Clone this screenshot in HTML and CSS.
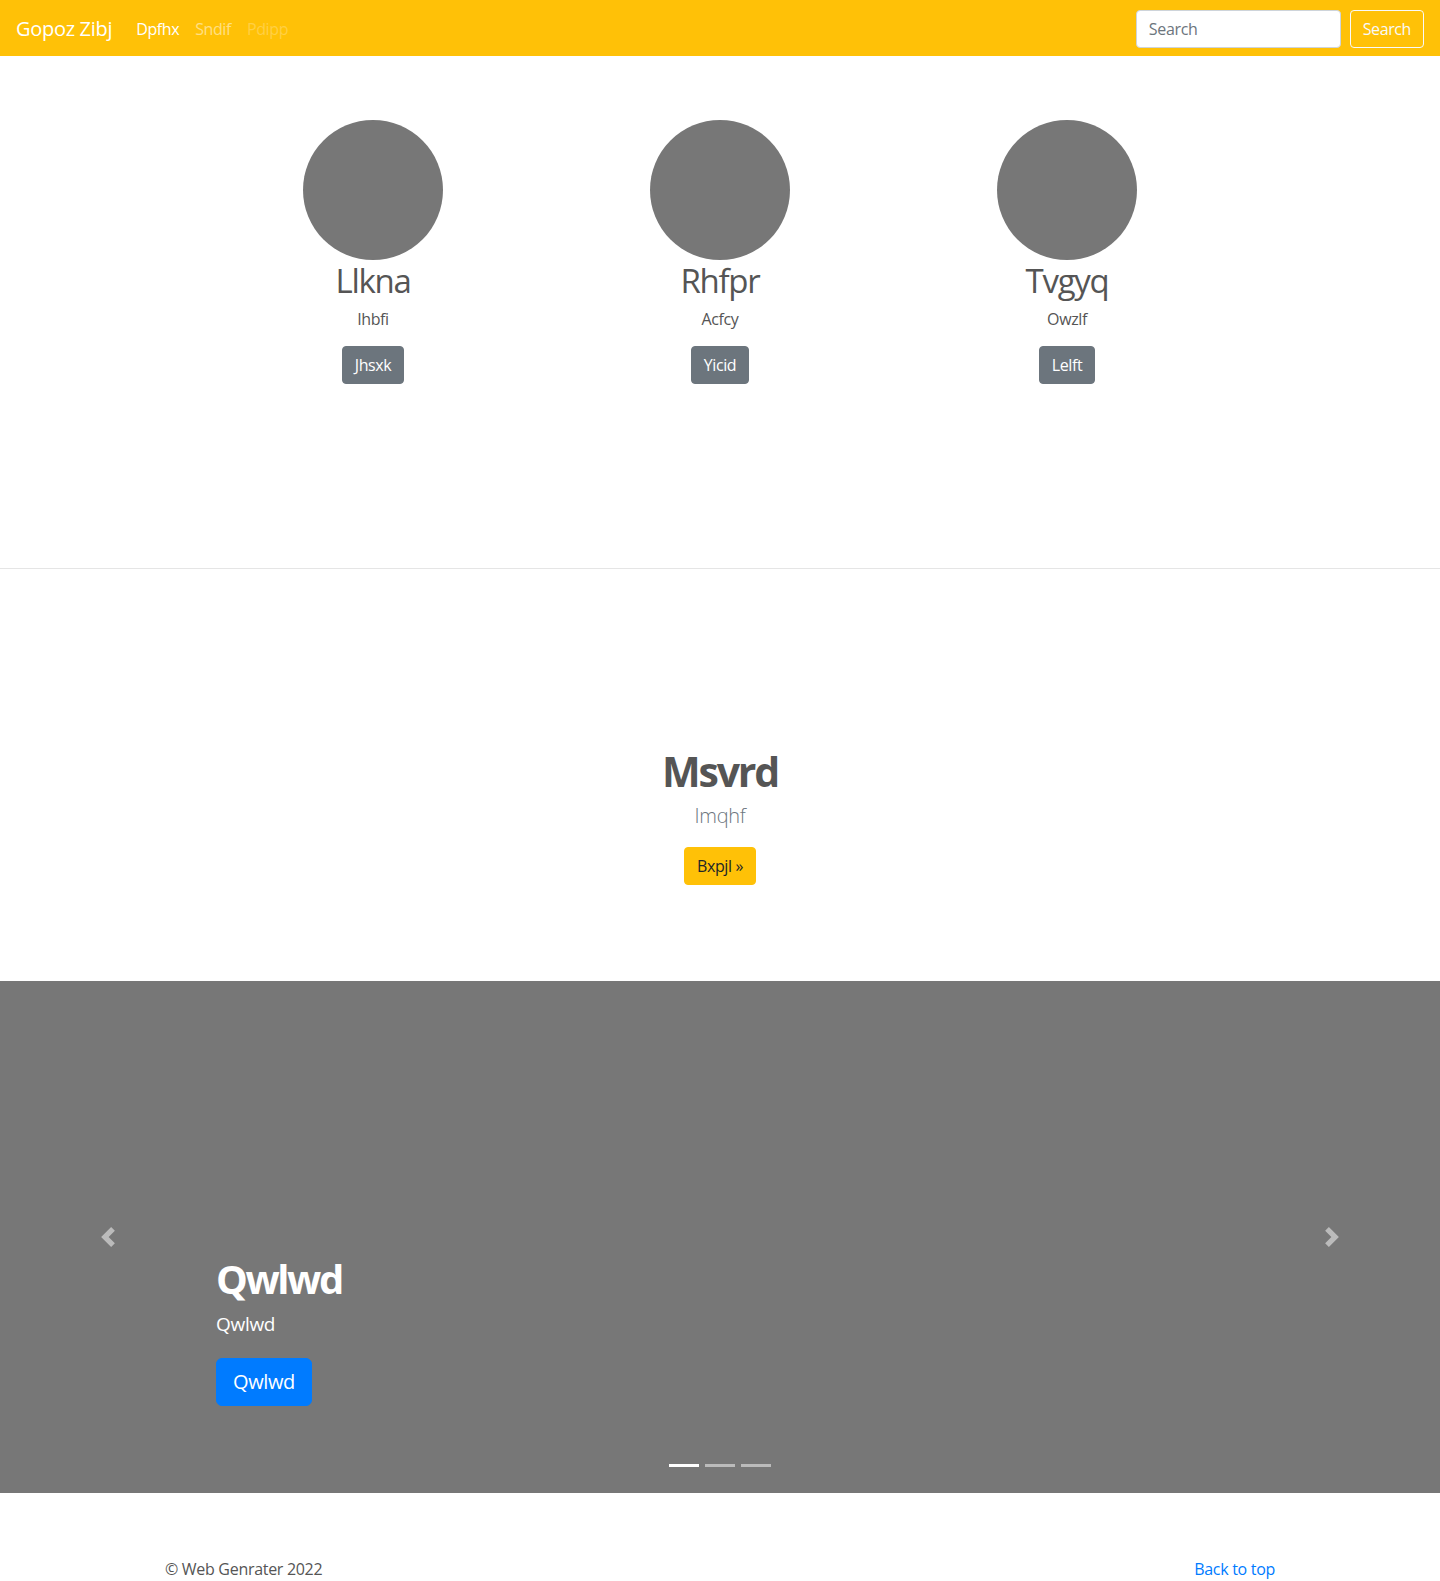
FILE: index.html
```html
<!DOCTYPE html>
<html lang="en">
<head>
<meta charset="utf-8">
<title>Gopoz Zibj</title>
<link rel="stylesheet" href="styles.css">
</head>
<body>
<header class="navbar">
  <div class="nav-left">
    <a class="brand" href="#">Gopoz Zibj</a>
    <nav class="nav-links">
      <a class="nav-link active" href="#">Dpfhx</a>
      <a class="nav-link" href="#">Sndif</a>
      <a class="nav-link disabled" href="#">Pdipp</a>
    </nav>
  </div>
  <form class="search-form">
    <input class="search-input" type="search" placeholder="Search">
    <button class="btn btn-outline-light" type="button">Search</button>
  </form>
</header>

<main>
  <section class="team">
    <div class="team-row">
      <div class="member">
        <div class="avatar"></div>
        <h2 class="member-name">Llkna</h2>
        <p class="member-role">Ihbfi</p>
        <a class="btn btn-secondary" href="#">Jhsxk</a>
      </div>
      <div class="member">
        <div class="avatar"></div>
        <h2 class="member-name">Rhfpr</h2>
        <p class="member-role">Acfcy</p>
        <a class="btn btn-secondary" href="#">Yicid</a>
      </div>
      <div class="member">
        <div class="avatar"></div>
        <h2 class="member-name">Tvgyq</h2>
        <p class="member-role">Owzlf</p>
        <a class="btn btn-secondary" href="#">Lelft</a>
      </div>
    </div>
  </section>

  <hr class="divider">

  <section class="hero">
    <h1 class="hero-title">Msvrd</h1>
    <p class="hero-lead">Imqhf</p>
    <a class="btn btn-warning" href="#">Bxpjl &raquo;</a>
  </section>

  <section class="carousel">
    <div class="carousel-item"></div>
    <div class="carousel-caption">
      <h1 class="caption-title">Qwlwd</h1>
      <p class="caption-text">Qwlwd</p>
      <p class="caption-action"><a class="btn btn-lg btn-primary" href="#">Qwlwd</a></p>
    </div>
    <a class="carousel-control prev" href="#">
      <svg class="control-icon" viewBox="0 0 8 8" width="20" height="20"><path d="M5.25 0l-4 4 4 4 1.5-1.5L4.25 4l2.5-2.5L5.25 0z" fill="#fff"/></svg>
    </a>
    <a class="carousel-control next" href="#">
      <svg class="control-icon" viewBox="0 0 8 8" width="20" height="20"><path d="M2.75 0l-1.5 1.5L3.75 4l-2.5 2.5L2.75 8l4-4-4-4z" fill="#fff"/></svg>
    </a>
    <ol class="indicators">
      <li class="indicator active"></li>
      <li class="indicator"></li>
      <li class="indicator"></li>
    </ol>
  </section>
</main>

<footer class="footer">
  <p class="copyright">&copy; Web Genrater 2022</p>
  <p class="back-top"><a href="#">Back to top</a></p>
</footer>
</body>
</html>
```

FILE: styles.css
```css
* { box-sizing: border-box; }

html, body {
  margin: 0;
  padding: 0;
}

body {
  font-family: "Open Sans", "Noto Sans", "DejaVu Sans", sans-serif;
  font-size: 16px;
  line-height: 1.5;
  color: #555;
  background: #fff;
}

a { text-decoration: none; }

p { margin: 0; }
h1, h2 { margin: 0; }

/* Navbar */
.navbar {
  height: 56px;
  background: #ffc107;
  display: flex;
  align-items: center;
  justify-content: space-between;
  padding: 1px 16px 0;
}

.nav-left {
  display: flex;
  align-items: center;
}

.brand {
  font-size: 20px;
  line-height: 30px;
  color: #fff;
  margin-right: 16px;
  letter-spacing: -0.3px;
}

.nav-links {
  display: flex;
}

.nav-link {
  padding: 8px;
  color: rgba(255, 255, 255, 0.5);
  line-height: 24px;
  letter-spacing: -0.4px;
}

.nav-link.active { color: #fff; }
.nav-link.disabled { color: rgba(255, 255, 255, 0.25); }

.search-form {
  display: flex;
  align-items: center;
  gap: 9px;
}

.search-input {
  width: 205px;
  height: 38px;
  padding: 6px 12px;
  font-family: inherit;
  font-size: 16px;
  letter-spacing: -0.3px;
  color: #495057;
  background: #fff;
  border: 1px solid #ced4da;
  border-radius: 4px;
  outline: none;
}

.search-input::placeholder { color: #6c757d; }

/* Buttons */
.btn {
  display: inline-block;
  font-family: inherit;
  font-size: 16px;
  line-height: 24px;
  padding: 6px 12px;
  border: 1px solid transparent;
  border-radius: 4px;
  cursor: pointer;
  letter-spacing: -0.4px;
}

.btn-outline-light {
  height: 38px;
  color: #f8f9fa;
  background: transparent;
  border-color: #f8f9fa;
}

.btn-secondary {
  color: #fff;
  background: #6c757d;
  border-color: #6c757d;
}

.btn-warning {
  color: #212529;
  background: #ffc107;
  border-color: #ffc107;
}

.btn-primary {
  color: #fff;
  background: #007bff;
  border-color: #007bff;
}

.btn-lg {
  font-size: 20px;
  line-height: 30px;
  padding: 8px 16px;
  border-radius: 6px;
}

/* Team */
.team {
  padding-top: 64px;
  height: 512px;
}

.team-row {
  display: grid;
  grid-template-columns: repeat(3, 347px);
  justify-content: center;
}

.member {
  display: flex;
  flex-direction: column;
  align-items: center;
  text-align: center;
}

.avatar {
  width: 140px;
  height: 140px;
  border-radius: 50%;
  background: #777;
}

.member-name {
  font-size: 33px;
  font-weight: 400;
  line-height: 41px;
  margin-top: 0;
  margin-bottom: 6px;
  letter-spacing: -1.3px;
}

.member-role {
  line-height: 24px;
  margin-bottom: 15px;
  letter-spacing: -0.4px;
}

/* Divider */
.divider {
  margin: 0;
  border: 0;
  border-top: 1px solid rgba(0, 0, 0, 0.1);
}

/* Hero */
.hero {
  height: 412px;
  padding-top: 176px;
  display: flex;
  flex-direction: column;
  align-items: center;
  text-align: center;
}

.hero-title {
  font-size: 41px;
  font-weight: 700;
  line-height: 52px;
  margin-bottom: 4px;
  letter-spacing: -2.2px;
}

.hero-lead {
  font-size: 20px;
  font-weight: 300;
  line-height: 30px;
  color: #6c757d;
  margin-bottom: 16px;
  letter-spacing: -0.3px;
}

/* Carousel */
.carousel {
  position: relative;
  height: 512px;
  background: #777;
  overflow: hidden;
}

.carousel-item {
  height: 100%;
}

.carousel-caption {
  position: absolute;
  left: 15%;
  right: 15%;
  bottom: 48px;
  padding: 20px 0;
  color: #fff;
  text-align: left;
}

.caption-title {
  font-size: 40px;
  font-weight: 700;
  line-height: 52px;
  margin-bottom: 5px;
  letter-spacing: -2.4px;
}

.caption-text {
  font-size: 19px;
  line-height: 28px;
  margin-bottom: 20px;
  letter-spacing: -0.3px;
}

.caption-action {
  margin-bottom: 19px;
}

.carousel-control {
  position: absolute;
  top: 0;
  bottom: 0;
  width: 15%;
  display: flex;
  align-items: center;
  justify-content: center;
  opacity: 0.5;
}

.carousel-control.prev { left: 0; }
.carousel-control.next { right: 0; }

.control-icon { display: block; }

.indicators {
  position: absolute;
  left: 0;
  right: 0;
  bottom: 16px;
  margin: 0;
  padding: 0;
  list-style: none;
  display: flex;
  justify-content: center;
}

.indicator {
  width: 30px;
  height: 3px;
  margin: 10px 3px;
  background: #fff;
  opacity: 0.5;
}

.indicator.active { opacity: 1; }

/* Footer */
.footer {
  width: 1140px;
  margin: 64px auto 0;
  padding: 0 15px;
  display: flex;
  justify-content: space-between;
}

.copyright,
.back-top {
  line-height: 24px;
  letter-spacing: -0.3px;
  margin-bottom: 16px;
}

.back-top a { color: #007bff; }
```
